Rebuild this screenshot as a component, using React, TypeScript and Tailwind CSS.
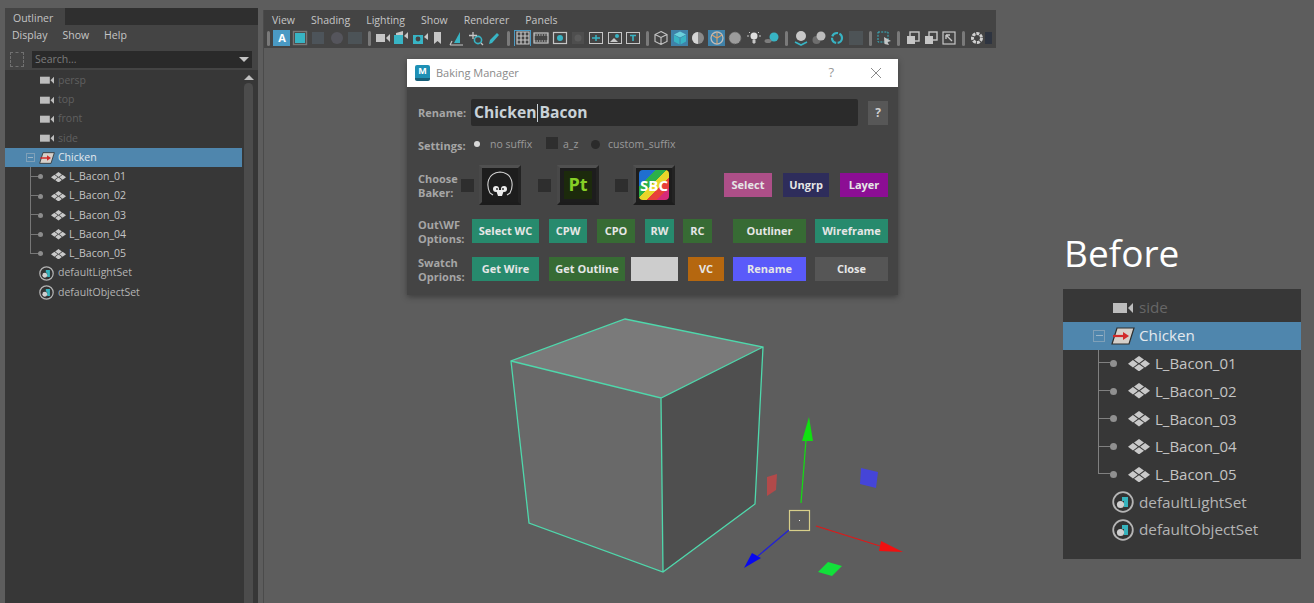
const FONT = "font-['Open_Sans','Noto_Sans',sans-serif]"

function CameraIcon({size}: {size: number}){
    return(
        <svg width={size} height={size * 0.6} viewBox="0 0 20 12" className="shrink-0">
            <rect x="0" y="1" width="14" height="10" fill="#bdbdbd"/>
            <path d="M15 6 L20 1 V11 Z" fill="#bdbdbd"/>
        </svg>
    )
}

function GroupIcon({size}: {size: number}){
    return(
        <svg width={size} height={size * 0.75} viewBox="0 0 24 18" className="shrink-0">
            <path d="M6 1 H23 L18 17 H1 Z" fill="#d6d0ca" stroke="#2e2e2e" strokeWidth="1.2"/>
            <path d="M2 9 H14" stroke="#d22a2a" strokeWidth="2.2"/>
            <path d="M12 5 L18 9 L12 13 Z" fill="#d22a2a"/>
        </svg>
    )
}

function MeshIcon({size}: {size: number}){
    return(
        <svg width={size} height={size * 0.7} viewBox="0 0 20 14" className="shrink-0" fill="#c9c9c9">
            <path d="M10 0 L14.5 3.2 L10 6.6 L5.5 3.2 Z"/>
            <path d="M10 7.4 L14.5 10.8 L10 14 L5.5 10.8 Z"/>
            <path d="M4.5 3.6 L9 7 L4.5 10.4 L0 7 Z"/>
            <path d="M15.5 3.6 L20 7 L15.5 10.4 L11 7 Z"/>
        </svg>
    )
}

function SetIcon({size}: {size: number}){
    return(
        <svg width={size} height={size} viewBox="0 0 22 22" className="shrink-0">
            <circle cx="11" cy="11" r="9.8" fill="#333" stroke="#b5b5b5" strokeWidth="1.8"/>
            <path d="M10 6 H16 V16 H12 V10 H10 Z" fill="#35b3bd"/>
            <circle cx="8.5" cy="13.5" r="3.6" fill="#cfcfcf"/>
        </svg>
    )
}

const BACONS = ['L_Bacon_01', 'L_Bacon_02', 'L_Bacon_03', 'L_Bacon_04', 'L_Bacon_05']

function ChildRow({name, last}: {name: string, last: boolean}){
    return(
        <div className="flex items-center h-[19.25px] pl-[25px] text-[10.5px] text-[#c4c4c4]">
            <div className="w-[8px] self-stretch flex flex-col shrink-0">
                <div className="h-1/2 border-l border-b border-[#777]"/>
                <div className={last ? 'h-1/2' : 'h-1/2 border-l border-[#777]'}/>
            </div>
            <div className="w-[5px] h-[5px] rounded-full bg-[#8c8c8c] shrink-0"/>
            <div className="w-[8px] shrink-0"/>
            <MeshIcon size={15}/>
            <span className="ml-[3px]">{name}</span>
        </div>
    )
}

function BigChildRow({name, last}: {name: string, last: boolean}){
    return(
        <div className="flex items-center h-[27.75px] pl-[35px] text-[15px] text-[#c4c4c4]">
            <div className="w-[12px] self-stretch flex flex-col shrink-0">
                <div className="h-1/2 border-l border-b border-[#808080]"/>
                <div className={last ? 'h-1/2' : 'h-1/2 border-l border-[#808080]'}/>
            </div>
            <div className="w-[7px] h-[7px] rounded-full bg-[#909090] shrink-0"/>
            <div className="w-[11px] shrink-0"/>
            <MeshIcon size={22}/>
            <span className="ml-[5px]">{name}</span>
        </div>
    )
}

function SmallOutliner(){
    return(
        <div className="flex-1 flex bg-[#373737] min-h-0">
            <div className="w-[237px] pt-[1px] shrink-0">
                {['persp', 'top', 'front', 'side'].map(n => (
                    <div key={n} className="flex items-center h-[19.25px] pl-[35px] text-[10.5px] text-[#606060]">
                        <CameraIcon size={14}/>
                        <span className="ml-[4px]">{n}</span>
                    </div>
                ))}
                <div className="flex items-center h-[19.25px] pl-[21px] text-[10.5px] text-[#e4e9ee] bg-[#4f86ad]">
                    <div className="w-[9px] h-[9px] border border-[#7fa0b8] flex items-center justify-center shrink-0">
                        <div className="w-[5px] h-px bg-[#9cb6c9]"/>
                    </div>
                    <div className="w-[4px] shrink-0"/>
                    <GroupIcon size={16}/>
                    <span className="ml-[3px]">Chicken</span>
                </div>
                {BACONS.map((n, i) => <ChildRow key={n} name={n} last={i === 4}/>)}
                {['defaultLightSet', 'defaultObjectSet'].map(n => (
                    <div key={n} className="flex items-center h-[19.25px] pl-[34px] text-[10.5px] text-[#b4b4b4]">
                        <SetIcon size={15}/>
                        <span className="ml-[4px]">{n}</span>
                    </div>
                ))}
            </div>
            <div className="flex-1 flex flex-col items-start pl-[2px] pt-[5px]">
                <div className="w-0 h-0 border-x-[5px] border-x-transparent border-b-[5px] border-b-[#c0c0c0]"/>
                <div className="mt-[3px] w-[9px] flex-1 rounded-t-full bg-[#4c4c4c]"/>
            </div>
        </div>
    )
}

function BeforePanel(){
    return(
        <div className="w-[238px] h-[270px] bg-[#373737] pt-[5px]">
            <div className="flex items-center h-[27.75px] pl-[50px] text-[15.2px] text-[#666]">
                <CameraIcon size={20}/>
                <span className="ml-[6px]">side</span>
            </div>
            <div className="flex items-center h-[27.75px] pl-[30px] text-[15.2px] text-[#e4e9ee] bg-[#4f86ad]">
                <div className="w-[12px] h-[12px] border border-[#7fa0b8] flex items-center justify-center shrink-0">
                    <div className="w-[7px] h-px bg-[#9cb6c9]"/>
                </div>
                <div className="w-[6px] shrink-0"/>
                <GroupIcon size={24}/>
                <span className="ml-[4px]">Chicken</span>
            </div>
            {BACONS.map((n, i) => <BigChildRow key={n} name={n} last={i === 4}/>)}
            {['defaultLightSet', 'defaultObjectSet'].map(n => (
                <div key={n} className="flex items-center h-[27.75px] pl-[49px] text-[15.3px] text-[#b4b4b4]">
                    <SetIcon size={22}/>
                    <span className="ml-[5px]">{n}</span>
                </div>
            ))}
        </div>
    )
}

const L = '#c6c6c6'
const T = '#38b4c4'
const TOOLS: {w: number, on?: string, d: React.ReactNode}[] = [
    {w: 8, d: null},
    {w: 19, on: 'bg-[#4a9ac4]', d: <text x="8" y="12" textAnchor="middle" fontSize="11" fontWeight="700" fill="#fff">A</text>},
    {w: 18, d: <><rect x="3" y="3" width="10" height="10" fill={T}/><rect x="1.5" y="1.5" width="13" height="13" fill="none" stroke="#777" strokeWidth="1.4"/></>},
    {w: 18, d: <rect x="2" y="2" width="12" height="12" fill="#4d545a"/>},
    {w: 19, d: <circle cx="8" cy="8" r="6" fill="#55555c"/>},
    {w: 18, d: <rect x="1" y="2" width="14" height="12" fill="#4c5357"/>},
    {w: 10, d: null},
    {w: 18, d: <><rect x="1" y="4" width="9" height="8" fill={L}/><path d="M11 8 L15 4 V12 Z" fill={L}/></>},
    {w: 18, d: <><rect x="1" y="5" width="9" height="9" fill={T}/><path d="M3 3 L10 1 V5 H3 Z" fill={L}/><path d="M11 6 L15 2 V9 Z" fill={L}/></>},
    {w: 19, d: <><rect x="1" y="5" width="10" height="9" fill={T}/><circle cx="6" cy="9" r="2.4" fill="#444"/><path d="M12 7 L16 3 V10 Z" fill={L}/></>},
    {w: 18, d: <path d="M4 2 H11 V14 L7.5 11 L4 14 Z" fill={L}/>},
    {w: 19, d: <><path d="M5 13 L11 2 V13 Z" fill={T}/><path d="M1 15 H14 M3 11 L1 15" stroke={L} strokeWidth="1.2" fill="none"/></>},
    {w: 19, d: <><circle cx="10" cy="10" r="3.6" fill="none" stroke={T} strokeWidth="1.6"/><path d="M5 2 V9 M1 5.5 H9 M13 13 L15 15" stroke={L} strokeWidth="1.3"/></>},
    {w: 18, d: <path d="M3 14 L4 10 L11 3 L13 5 L6 13 Z" fill={T}/>},
    {w: 10, d: null},
    {w: 19, on: 'border border-[#4a9ac4]', d: <path d="M2 2 H14 V14 H2 Z M6 2 V14 M10 2 V14 M2 6 H14 M2 10 H14" fill="none" stroke={L} strokeWidth="1.2"/>},
    {w: 18, d: <><rect x="1" y="3" width="14" height="10" fill="none" stroke={L} strokeWidth="1.2"/><path d="M1 5 H15 M1 11 H15" stroke={L} strokeDasharray="1.5 1"/></>},
    {w: 19, d: <><rect x="1.5" y="2.5" width="13" height="11" fill="none" stroke={L} strokeWidth="1.2"/><circle cx="8" cy="8" r="3" fill={T}/></>},
    {w: 18, d: <><rect x="2" y="2" width="12" height="12" fill="#4e4e4e"/><circle cx="8" cy="8" r="3.5" fill="#5b5b5b"/></>},
    {w: 18, d: <><rect x="1.5" y="2.5" width="13" height="11" fill="none" stroke={L}/><path d="M4 8 H12 M8 5 V11" stroke={T} strokeWidth="1.5"/></>},
    {w: 19, d: <><rect x="1.5" y="2.5" width="13" height="11" fill="none" stroke={L}/><circle cx="10" cy="6" r="2" fill={T}/><path d="M3 12 L7 8 L11 12 Z" fill={L}/></>},
    {w: 18, d: <><rect x="1.5" y="2.5" width="13" height="11" fill="none" stroke={L}/><path d="M5 5.5 H11 M8 5.5 V11" stroke={T} strokeWidth="1.6"/></>},
    {w: 10, d: null},
    {w: 18, d: <path d="M8 1.5 L14 4.5 V11.5 L8 14.5 L2 11.5 V4.5 Z M2 4.5 L8 7.5 L14 4.5 M8 7.5 V14.5" fill="none" stroke={L} strokeWidth="1.1"/>},
    {w: 19, on: 'bg-[#3f81a8]', d: <><path d="M8 1.5 L14 4.5 L8 7.5 L2 4.5 Z" fill="#6ad0dc"/><path d="M2 5 L7.5 8 V14.5 L2 11.5 Z M14 5 L8.5 8 V14.5 L14 11.5 Z" fill={T}/></>},
    {w: 18, d: <><circle cx="8" cy="8" r="6" fill="#8a8a8a"/><path d="M8 2 A6 6 0 0 0 8 14 Z" fill="#d4d4d4"/></>},
    {w: 19, on: 'bg-[#3f81a8]', d: <><circle cx="8" cy="8" r="6" fill="none" stroke="#bbb" strokeWidth="1.3"/><path d="M8 2 V14 M3 5 L8 8 L13 5" stroke="#d9a06a" strokeWidth="1.1" fill="none"/></>},
    {w: 18, d: <circle cx="8" cy="8" r="6" fill="#9c9c9c" stroke="#666" strokeDasharray="1.5 1.5"/>},
    {w: 19, d: <><circle cx="8" cy="6" r="3.5" fill="#ddd"/><path d="M7 10 H9 V13 H7 Z M1 6 H3 M13 6 H15 M3 2 L4 3 M13 2 L12 3" stroke={L} fill={L}/></>},
    {w: 18, d: <><circle cx="10" cy="7" r="4.5" fill={T}/><ellipse cx="4" cy="11" rx="3.5" ry="2" fill="#7d7d7d"/></>},
    {w: 10, d: null},
    {w: 19, d: <><circle cx="8" cy="6" r="5" fill="#c9c9c9"/><path d="M2 12 L8 15 L14 12" stroke={T} strokeWidth="1.6" fill="none"/></>},
    {w: 18, d: <><circle cx="5.5" cy="10" r="4" fill="#6e6e6e"/><circle cx="10" cy="6" r="4.5" fill="#bdbdbd"/></>},
    {w: 18, d: <circle cx="8" cy="8" r="5" fill="none" stroke={T} strokeWidth="2.2" strokeDasharray="7 1.5"/>},
    {w: 19, d: <rect x="1" y="1" width="14" height="14" fill="#4d5356"/>},
    {w: 10, d: null},
    {w: 18, d: <><rect x="2" y="2" width="10" height="10" fill="none" stroke={T} strokeDasharray="2 1.2"/><path d="M8 7 L15 11 L11.5 12 L13 15 L8.5 14 Z" fill={L}/></>},
    {w: 10, d: null},
    {w: 19, d: <><rect x="5" y="2" width="9" height="9" fill="none" stroke={L} strokeWidth="1.4"/><rect x="2" y="6" width="8" height="8" fill={L}/></>},
    {w: 18, d: <><rect x="6" y="2" width="8" height="8" fill="none" stroke={L} strokeWidth="1.4"/><rect x="2" y="6" width="8" height="8" fill={L}/></>},
    {w: 18, d: <><rect x="2" y="2" width="12" height="12" fill="none" stroke={L} strokeWidth="1.2"/><path d="M5 5 L11 11 M5 5 H9 M5 5 V9" stroke={L} strokeWidth="1.4" fill="none"/></>},
    {w: 10, d: null},
    {w: 17, d: <circle cx="8" cy="8" r="4.5" fill="none" stroke="#d0d0d0" strokeWidth="3" strokeDasharray="3 1"/>},
    {w: 7, d: <rect x="2" y="2" width="10" height="12" fill="#2e3440"/>},
]

function ToolButton({w, on, d}: {w: number, on?: string, d: React.ReactNode}){
    if(!d) return <div style={{width: w}} className="h-[15px] flex justify-center shrink-0"><div className="w-[3px] h-full rounded-full bg-[#7a7a7a]"/></div>
    return(
        <div style={{width: w}} className="flex justify-center shrink-0 overflow-hidden">
            <div className={`w-[17px] h-[17px] shrink-0 flex items-center justify-center ${on ?? ''}`}>
                <svg width="16" height="16" viewBox="0 0 16 16" className="shrink-0">{d}</svg>
            </div>
        </div>
    )
}

function Btn({w, bg, children}: {w: number, bg: string, children?: React.ReactNode}){
    return <button style={{width: w}} className={`${bg} h-[24px] shrink-0 text-[11px] font-bold text-[#e6e6e6] flex items-center justify-center`}>{children}</button>
}

function Check(){
    return <div className="w-[13px] h-[13px] bg-[#2e2e2e] shrink-0"/>
}

function BakerFrame({children}: {children: React.ReactNode}){
    return(
        <div className="w-[42px] h-[40px] bg-[#1d1d1d] border-[3px] border-t-[#505050] border-l-[#484848] border-r-[#232323] border-b-[#1c1c1c] shrink-0 flex items-center justify-center overflow-hidden">
            {children}
        </div>
    )
}

const TEAL = 'bg-[#278a6d]'
const GREEN = 'bg-[#376b34]'

function Label({children, w = 'w-[53px]'}: {children: React.ReactNode, w?: string}){
    return <div className={`${w} shrink-0 pt-[1px] text-[11px] leading-[14px] font-bold text-[#a6a6a6]`}>{children}</div>
}

function BakingManager(){
    return(
        <div className="absolute left-[143px] top-[49px] w-[491px] h-[236px] bg-[#444444] shadow-[0_2px_6px_rgba(0,0,0,0.35)] flex flex-col">
            <div className="h-[28px] bg-white flex items-center shrink-0 pl-[8px] pr-[16px]">
                <div className="w-[15px] h-[16px] rounded-[2px] bg-[#1e90b5] border-b-[3px] border-[#17607a] text-white text-[9px] font-bold leading-[12px] text-center">M</div>
                <span className="ml-[6px] text-[11px] text-[#8a8a8a] flex-1">Baking Manager</span>
                <span className="text-[13px] text-[#999] mr-[36px]">?</span>
                <svg width="12" height="12" viewBox="0 0 12 12"><path d="M1 1 L11 11 M11 1 L1 11" stroke="#8a8a8a" strokeWidth="1"/></svg>
            </div>

            <div className="flex items-center pl-[11px] mt-[11px] h-[29px]">
                <Label>Rename:</Label>
                <div className="w-[387px] h-[27px] bg-[#2b2b2b] rounded-[2px] pl-[3px] pt-[1px] text-[15.7px] font-bold text-[#c9d2d8] flex items-center">
                    Chicken<span className="inline-block w-px h-[18px] mx-px bg-[#c9d2d8]"/>Bacon
                </div>
                <div className="ml-[10px] w-[20px] h-[24px] bg-[#575757] text-[12px] font-bold text-[#d0d0d0] flex items-center justify-center">?</div>
            </div>

            <div className="flex items-center pl-[11px] mt-[9px] h-[18px] text-[10.5px] text-[#9a9a9a]">
                <Label>Settings:</Label>
                <div className="w-[6px] h-[6px] rounded-full bg-[#d8d8d8] ml-[3px] mb-[3px]"/>
                <span className="ml-[10px] w-[56px]">no suffix</span>
                <div className="w-[12px] h-[12px] bg-[#2e2e2e] mb-[4px]"/>
                <span className="ml-[5px] w-[28px]">a_z</span>
                <div className="w-[9px] h-[9px] rounded-full bg-[#2b2b2b] mb-[2px]"/>
                <span className="ml-[8px]">custom_suffix</span>
            </div>

            <div className="flex items-center pl-[11px] mt-[11px] h-[40px]">
                <Label w="w-[43px]">Choose Baker:</Label>
                <Check/>
                <div className="w-[5px]"/>
                <BakerFrame>
                    <svg width="32" height="32" viewBox="0 0 32 32">
                        <path d="M6 24 C2 16 3 4 16 3 C29 4 30 16 26 24 L23 26 M6 24 L9 26" fill="none" stroke="#d4d4d4" strokeWidth="1.1"/>
                        <circle cx="12" cy="20" r="3" fill="#ececec"/>
                        <circle cx="20" cy="20" r="3" fill="#ececec"/>
                        <path d="M12 21 H20 L18 27 H14 Z" fill="#ececec"/>
                        <circle cx="13" cy="20" r="0.9" fill="#1d1d1d"/>
                        <circle cx="19" cy="20" r="0.9" fill="#1d1d1d"/>
                    </svg>
                </BakerFrame>
                <div className="w-[17px]"/>
                <Check/>
                <div className="w-[6px]"/>
                <BakerFrame>
                    <div className="w-[28px] h-[28px] bg-[#1c2a0c] text-[#86d026] text-[18px] font-bold leading-[27px] text-center">Pt</div>
                </BakerFrame>
                <div className="w-[16px]"/>
                <Check/>
                <div className="w-[5px]"/>
                <BakerFrame>
                    <div className="w-[30px] h-[30px] rounded-[4px] bg-[linear-gradient(135deg,#1f6fd0_0%,#1f6fd0_28%,#2bb04a_28%,#2bb04a_46%,#e8d52a_46%,#e8d52a_62%,#e8403a_62%,#e8403a_80%,#d62a7a_80%)] text-[15px] font-bold text-white flex items-center justify-center">SBC</div>
                </BakerFrame>
                <div className="w-[49px]"/>
                <Btn w={48} bg="bg-[#ad4f88]">Select</Btn>
                <div className="w-[11px]"/>
                <Btn w={46} bg="bg-[#2e2d5b]">Ungrp</Btn>
                <div className="w-[11px]"/>
                <Btn w={48} bg="bg-[#8c0e94]">Layer</Btn>
            </div>

            <div className="flex items-center pl-[11px] mt-[14px] h-[24px]">
                <Label w="w-[54px]">Out\WF Options:</Label>
                <Btn w={67} bg={TEAL}>Select WC</Btn>
                <div className="w-[10px]"/>
                <Btn w={38} bg={TEAL}>CPW</Btn>
                <div className="w-[10px]"/>
                <Btn w={38} bg={GREEN}>CPO</Btn>
                <div className="w-[10px]"/>
                <Btn w={29} bg={TEAL}>RW</Btn>
                <div className="w-[9px]"/>
                <Btn w={29} bg={GREEN}>RC</Btn>
                <div className="w-[21px]"/>
                <Btn w={73} bg={GREEN}>Outliner</Btn>
                <div className="w-[9px]"/>
                <Btn w={73} bg={TEAL}>Wireframe</Btn>
            </div>

            <div className="flex items-center pl-[11px] mt-[14px] h-[24px]">
                <Label w="w-[54px]">Swatch Oprions:</Label>
                <Btn w={67} bg={TEAL}>Get Wire</Btn>
                <div className="w-[10px]"/>
                <Btn w={76} bg={GREEN}>Get Outline</Btn>
                <div className="w-[6px]"/>
                <Btn w={47} bg="bg-[#cdcdcd]"/>
                <div className="w-[10px]"/>
                <Btn w={36} bg="bg-[#b5670f]">VC</Btn>
                <div className="w-[9px]"/>
                <Btn w={73} bg="bg-[#5a5afa]">Rename</Btn>
                <div className="w-[9px]"/>
                <Btn w={73} bg="bg-[#565656]">Close</Btn>
            </div>
        </div>
    )
}

function Scene(){
    return(
        <svg className="absolute left-[236px] top-[300px]" width="420" height="290" viewBox="500 310 420 290">
            <path d="M625 319 L763 347 L661 398 L511 361 Z" fill="#7a7a7a"/>
            <path d="M511 361 L661 398 L663 572 L529 523 Z" fill="#696969"/>
            <path d="M661 398 L763 347 L755 504 L663 572 Z" fill="#4f4f4f"/>
            <path d="M625 319 L763 347 L755 504 L663 572 L529 523 L511 361 Z M511 361 L661 398 L763 347 M661 398 L663 572" fill="none" stroke="#4fd8ac" strokeWidth="1.3"/>
            <path d="M801 503 L806 440" stroke="#12e012" strokeWidth="1.2"/>
            <path d="M809 417 L813 441 L802 441 Z" fill="#10e010"/>
            <rect x="789.5" y="510.5" width="20" height="20" fill="none" stroke="#d8cf8a" strokeWidth="1.2"/>
            <rect x="799" y="520" width="1" height="1" fill="#eee"/>
            <path d="M789 530 L758 556" stroke="#2020d8" strokeWidth="1.2"/>
            <path d="M744 568 L752 553 L761 558 Z" fill="#0808f0"/>
            <path d="M816 526 L880 546" stroke="#e01818" strokeWidth="1.2"/>
            <path d="M903 552 L881 541 L879 551 Z" fill="#f01010"/>
            <path d="M767 477 L777 474 L776 490 L767 496 Z" fill="#b24a4a"/>
            <path d="M861 468 L878 472 L876 488 L860 484 Z" fill="#4545d8"/>
            <path d="M818 572 L828 562 L842 566 L832 576 Z" fill="#12e03a"/>
        </svg>
    )
}

export default function App(){
    return(
        <div className={`w-[1314px] h-[603px] bg-[#5d5d5d] overflow-hidden flex ${FONT}`}>
            <div className="w-[253px] ml-[5px] mt-[8px] flex flex-col shrink-0 bg-[#444444]">
                <div className="h-[17px] bg-[#2f2f2f] shrink-0">
                    <div className="w-[60px] h-full bg-[#444444] text-[10.5px] leading-[21px] pl-[8px] text-[#c2c2c2]">Outliner</div>
                </div>
                <div className="h-[22px] flex items-center gap-[15px] pl-[7px] text-[10.5px] text-[#c6c6c6] shrink-0">
                    <span>Display</span><span>Show</span><span>Help</span>
                </div>
                <div className="h-[23px] flex items-center pl-[5px] pr-[6px] pt-[2px] shrink-0">
                    <div className="w-[14px] h-[15px] border border-dashed border-[#707070] shrink-0"/>
                    <div className="ml-[8px] flex-1 h-[17px] bg-[#2a2a2a] flex items-center justify-between px-[3px] text-[10.5px] text-[#7c7c7c]">
                        <span>Search...</span>
                        <div className="w-0 h-0 border-x-[5px] border-x-transparent border-t-[5px] border-t-[#c4c4c4]"/>
                    </div>
                </div>
                <SmallOutliner/>
            </div>

            <div className="relative w-[733px] ml-[5px] mt-[10px] shrink-0 border-l border-[#4b4b4b]">
                <div className="h-[38px] bg-[#444444]">
                    <div className="h-[20px] flex items-center gap-[16px] pl-[8px] pt-[1px] text-[10.5px] text-[#c6c6c6]">
                        <span>View</span><span>Shading</span><span>Lighting</span><span>Show</span><span>Renderer</span><span>Panels</span>
                    </div>
                    <div className="h-[16px] flex items-center overflow-hidden">
                        {TOOLS.map((t, i) => <ToolButton key={i} w={t.w} on={t.on} d={t.d}/>)}
                    </div>
                </div>
                <BakingManager/>
                <Scene/>
            </div>

            <div className="flex-1 pl-[67px] pt-[230px]">
                <div className="text-[37px] leading-[46px] text-white ml-[1px]">Before</div>
                <div className="mt-[13px]">
                    <BeforePanel/>
                </div>
            </div>
        </div>
    )
}
